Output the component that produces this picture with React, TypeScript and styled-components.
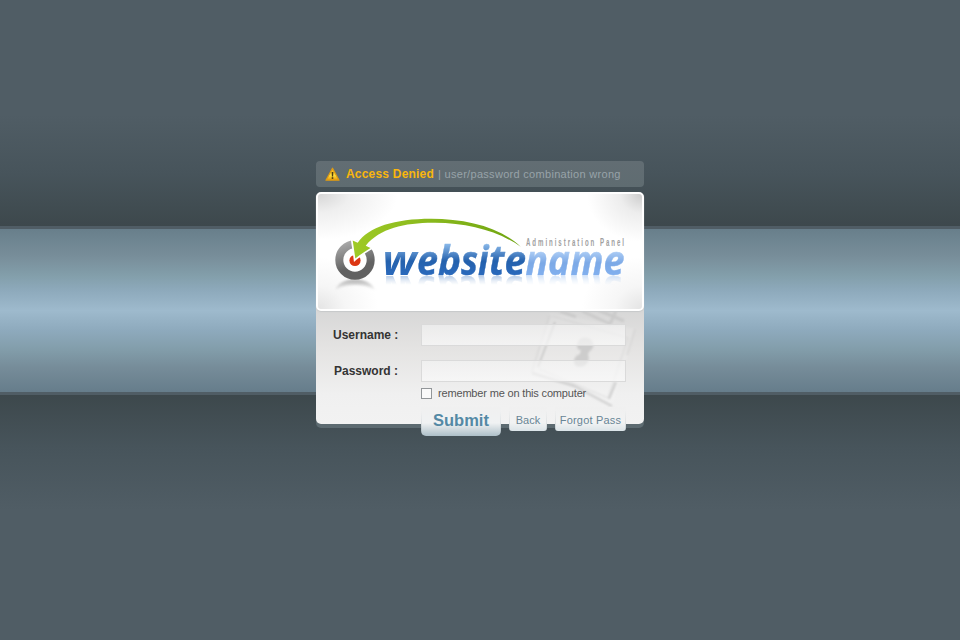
import React from "react";
import styled, { createGlobalStyle, css } from "styled-components";

const GlobalStyle = createGlobalStyle`
  * { box-sizing: border-box; }
  body { margin: 0; background: #505d65; }
`;

const Page = styled.main`
  height: 640px;
  padding-top: 161px;
  font-family: "Liberation Sans", Arial, sans-serif;
  background:
    linear-gradient(#505d65, #505d65) 0 226px / 100% 3px no-repeat,
    linear-gradient(#687f8b 0%, #788e9a 17%, #839fab 29%, #8eaabc 38%, #9ebacd 50%, #8eaabd 62%, #829daa 74%, #768c99 85%, #667d8b 100%) 0 229px / 100% 163px no-repeat,
    linear-gradient(#505d65, #505d65) 0 392px / 100% 3px no-repeat,
    linear-gradient(#505d65 0, #505d65 115px, #47545b 174px, #3d484c 226px, #3d484c 395px, #47545b 447px, #505d65 510px, #505d65 100%);
`;

const Panel = styled.div`
  width: 328px;
  margin: 0 auto;
  display: flex;
  flex-direction: column;
`;

const Alert = styled.div`
  height: 26px;
  margin-bottom: 5px;
  padding: 0 9px;
  display: flex;
  align-items: center;
  border-radius: 4px;
  background: linear-gradient(#626d73, #5f6c71);
  white-space: nowrap;
  svg { flex: none; margin-right: 6px; }
`;

const AlertTitle = styled.strong`
  width: 92px;
  font-size: 12px;
  letter-spacing: 0.2px;
  color: #f9b60d;
`;

const AlertText = styled.span`
  font-size: 11px;
  letter-spacing: 0.3px;
  color: #98a3a9;
`;

const LogoCard = styled.header`
  position: relative;
  z-index: 1;
  display: grid;
  align-items: start;
  height: 119px;
  border: 2px solid #fff;
  border-radius: 5px;
  background:
    radial-gradient(ellipse 80px 46px at 0 0, #d6d6d6, #efefef 40%, rgba(255,255,255,0)),
    radial-gradient(ellipse 55px 48px at 100% 0, #cccccc, #ededed 40%, rgba(255,255,255,0)),
    radial-gradient(ellipse 60px 52px at 0 100%, #e4e4e4, #f6f6f6 45%, rgba(255,255,255,0)),
    radial-gradient(ellipse 60px 52px at 100% 100%, #e4e4e4, #f6f6f6 45%, rgba(255,255,255,0)),
    #fff;
  box-shadow: 0 1px 1px #c7c9ca;
  svg { grid-area: 1 / 1; }
`;

const WordmarkArt = styled.svg`
  -webkit-box-reflect: below -27px linear-gradient(transparent 76%, rgba(0, 0, 0, 0.1) 80%, rgba(0, 0, 0, 0.4) 87%);
`;

const Form = styled.form`
  position: relative;
  height: 117px;
  margin-top: -4px;
  padding: 17px 18px 0 17px;
  border-radius: 0 0 5px 5px;
  background: linear-gradient(#d6d6d6, #e4e3e2 35%, #f0f0f0 75%, #f2f2f2);
  box-shadow: 0 4px 0 #5d6b71;
`;

const LockArt = styled.svg`
  position: absolute;
  top: 0;
  right: 0;
`;

const Field = styled.label`
  position: relative;
  display: grid;
  grid-template-columns: 88px 205px;
  align-items: center;
  height: 22px;
  margin-bottom: 14px;
`;

const Label = styled.span`
  width: 65px;
  font-size: 12px;
  font-weight: bold;
  color: #343434;
  text-align: right;
  white-space: nowrap;
`;

const Input = styled.input`
  width: 205px;
  height: 22px;
  padding: 0 5px;
  border: 1px solid #dadada;
  outline: none;
  background: linear-gradient(rgba(245, 245, 245, 0.6), rgba(250, 250, 250, 0.7));
`;

const Remember = styled.label`
  position: relative;
  display: flex;
  align-items: center;
  height: 12px;
  margin: -9px 0 0 88px;
  font-size: 11px;
  letter-spacing: -0.17px;
  color: #555;
  white-space: nowrap;
`;

const Box = styled.input`
  appearance: none;
  width: 11px;
  height: 11px;
  margin: 0 6px 0 0;
  border: 1px solid #929699;
  background: #fafafa;
`;

const Actions = styled.div`
  position: relative;
  display: flex;
  align-items: flex-start;
  gap: 8px;
  margin: 8px 0 0 88px;
`;

const Button = styled.button<{ $primary?: boolean; $width: number; $tracking?: number }>`
  width: ${(p) => p.$width}px;
  height: 24px;
  padding: 1px 0 0;
  border: 0;
  border-radius: 0 0 3px 3px;
  font: 11px "Liberation Sans", Arial, sans-serif;
  letter-spacing: ${(p) => p.$tracking ?? 0}px;
  color: #688595;
  white-space: nowrap;
  background:
    linear-gradient(transparent 15%, rgba(150, 162, 168, 0.35)) 0 0 / 1px 100% no-repeat,
    linear-gradient(transparent 15%, rgba(150, 162, 168, 0.35)) 100% 0 / 1px 100% no-repeat,
    linear-gradient(#f0f0f0, #f2f3f3 65%, #dbe4e8);
  ${(p) => p.$primary && css`
    height: 29px;
    padding: 0 0 3px;
    border-radius: 0 0 5px 5px;
    font-size: 16.5px;
    font-weight: bold;
    color: #5489a5;
    background:
      linear-gradient(transparent 15%, rgba(150, 162, 168, 0.4)) 0 0 / 1px 100% no-repeat,
      linear-gradient(transparent 15%, rgba(150, 162, 168, 0.4)) 100% 0 / 1px 100% no-repeat,
      linear-gradient(#f0f0f0, #f0f2f3 55%, #adbfc8);
  `}
`;

const WarningIcon = () => (
  <svg width="15" height="15" viewBox="0 0 15 15">
    <defs>
      <linearGradient id="warn" x2="0" y2="1">
        <stop stopColor="#f3a810" /><stop offset=".6" stopColor="#ffe040" /><stop offset="1" stopColor="#e79708" />
      </linearGradient>
    </defs>
    <path d="M7.5 1.3 14 13.2H1Z" fill="url(#warn)" stroke="#dd9a14" strokeWidth="1.3" strokeLinejoin="round" />
    <path d="M6.6 5h1.8l-.3 4.4H6.9Z" fill="#4a3a12" />
    <rect x="6.7" y="10.2" width="1.6" height="1.7" fill="#4a3a12" />
  </svg>
);

const letters: [string, number, number][] = [
  ["w", 64.5, 34], ["e", 99, 21], ["b", 120, 23], ["s", 143, 17],
  ["i", 160, 10.5], ["t", 171, 15.5], ["e", 186.5, 21.5],
  ["n", 207.5, 22.5], ["a", 230, 22], ["m", 252.5, 33], ["e", 285.5, 21],
];

const Wordmark = () => (
  <WordmarkArt width="324" height="95" viewBox="0 0 324 95">
    <defs>
      <linearGradient id="deep" gradientUnits="userSpaceOnUse" x1="0" y1="49" x2="0" y2="82">
        <stop stopColor="#8fbdec" /><stop offset=".55" stopColor="#2461ad" /><stop offset="1" stopColor="#2b6abd" />
      </linearGradient>
      <linearGradient id="pale" gradientUnits="userSpaceOnUse" x1="0" y1="56" x2="0" y2="82">
        <stop stopColor="#b2d1f7" /><stop offset=".5" stopColor="#7ca9e6" /><stop offset="1" stopColor="#82b0ef" />
      </linearGradient>
    </defs>
    <text y="81" fontFamily="'Open Sans', 'Noto Sans', sans-serif" fontStyle="italic" fontWeight="700" fontSize="41">
      {letters.map(([ch, x, w], i) => {
        const paint = i < 7 ? "url(#deep)" : "url(#pale)";
        return (
          <tspan key={i} x={x} textLength={w} lengthAdjust="spacingAndGlyphs" fill={paint} stroke={paint} strokeWidth={i === 0 ? 0 : 0.4}>{ch}</tspan>
        );
      })}
    </text>
  </WordmarkArt>
);

const Emblem = () => (
  <svg width="324" height="115" viewBox="0 0 324 115">
    <defs>
      <linearGradient id="ring" x2="0.3" y2="1">
        <stop stopColor="#a9a9a9" /><stop offset=".8" stopColor="#626262" />
      </linearGradient>
      <linearGradient id="green" x2="1" y2="0">
        <stop stopColor="#9fca26" /><stop offset="1" stopColor="#6fa411" />
      </linearGradient>
      <linearGradient id="ringFade" gradientUnits="userSpaceOnUse" x1="0" y1="86" x2="0" y2="98">
        <stop stopColor="#9a9a9a" stopOpacity=".75" /><stop offset="1" stopColor="#bbb" stopOpacity="0" />
      </linearGradient>
      <filter id="soft"><feGaussianBlur stdDeviation=".9" /></filter>
    </defs>
    <path d="M17 96C20 88 29 85.500 37 85.500S54 88 57 96C50 92 44 91 37 91S24 92 17 96Z" fill="url(#ringFade)" filter="url(#soft)" />
    <circle cx="37" cy="66" r="15.700" fill="#fff" stroke="url(#ring)" strokeWidth="8" />
    <circle cx="37" cy="66.500" r="5.600" fill="#dc3714" />
    <path
      d="M34.700 46.500C35.500 52 36.500 58 37.300 64.500C42 60.500 47 57.500 52.500 54L47.700 51.700C62 34 88 28.500 117 28.800C150 29 180 37 202.700 52.700C182 33 148 24.700 113 24.700C77 24.700 50 33 39.700 48.700Z"
      fill="url(#green)" stroke="#fff" strokeWidth="3.500" paintOrder="stroke"
    />
    <text transform="translate(208 51.500) scale(.58 1)" textLength="169" fontFamily="'Liberation Sans', sans-serif" fontWeight="700" fontSize="10.500" fill="#a0a0a0">Administration Panel</text>
  </svg>
);

const Padlock = () => (
  <LockArt width="120" height="108" viewBox="0 0 120 108">
    <defs><filter id="haze"><feGaussianBlur stdDeviation=".8" /></filter></defs>
    <g fill="none" strokeLinejoin="round" filter="url(#haze)">
      <path d="M26 6 112 22 88 98 8 66Z" fill="#fff" fillOpacity=".12" />
      <path d="M26 8 8 65M111 22 103 48" stroke="#b5b5b5" strokeOpacity=".25" strokeWidth="2" />
      <path d="M8 66 50 79 88 99" stroke="#a8a8a8" strokeOpacity=".45" strokeWidth="2.500" />
      <path d="M31 15 14 60M92 75 85 92" stroke="#a5a5a5" strokeOpacity=".45" strokeWidth="2" />
      <path d="M28 9 104 31 84 91 15 62" stroke="#bbb" strokeOpacity=".25" strokeWidth="1.500" />
      <path d="M36 4 52 10M58 4 86 17 92 4M74 3 100 14" stroke="#b8b8b8" strokeOpacity=".45" strokeWidth="3" />
    </g>
    <path
      d="M53 39c0-7 6-10 11-8 6 2 7 9 3 12-2 2-3 3-3 5 2 3 0 9-4 11-5 2-10 0-10-4 0-5 3-7 6-8 0-2 1-3 1-4-2 0-4-1-4-4Z"
      fill="#aaa" fillOpacity=".45" filter="url(#haze)"
    />
  </LockArt>
);

export default function App() {
  return (
    <>
      <GlobalStyle />
      <Page>
        <Panel>
          <Alert>
            <WarningIcon />
            <AlertTitle>Access Denied</AlertTitle>
            <AlertText>| user/password combination wrong</AlertText>
          </Alert>
          <LogoCard>
            <Wordmark />
            <Emblem />
          </LogoCard>
          <Form onSubmit={(e) => e.preventDefault()}>
            <Padlock />
            <Field><Label>Username :</Label><Input /></Field>
            <Field><Label>Password :</Label><Input type="password" /></Field>
            <Remember><Box type="checkbox" />remember me on this computer</Remember>
            <Actions>
              <Button $primary $width={80}>Submit</Button>
              <Button $width={38}>Back</Button>
              <Button $width={71} $tracking={0.2}>Forgot Pass</Button>
            </Actions>
          </Form>
        </Panel>
      </Page>
    </>
  );
}
